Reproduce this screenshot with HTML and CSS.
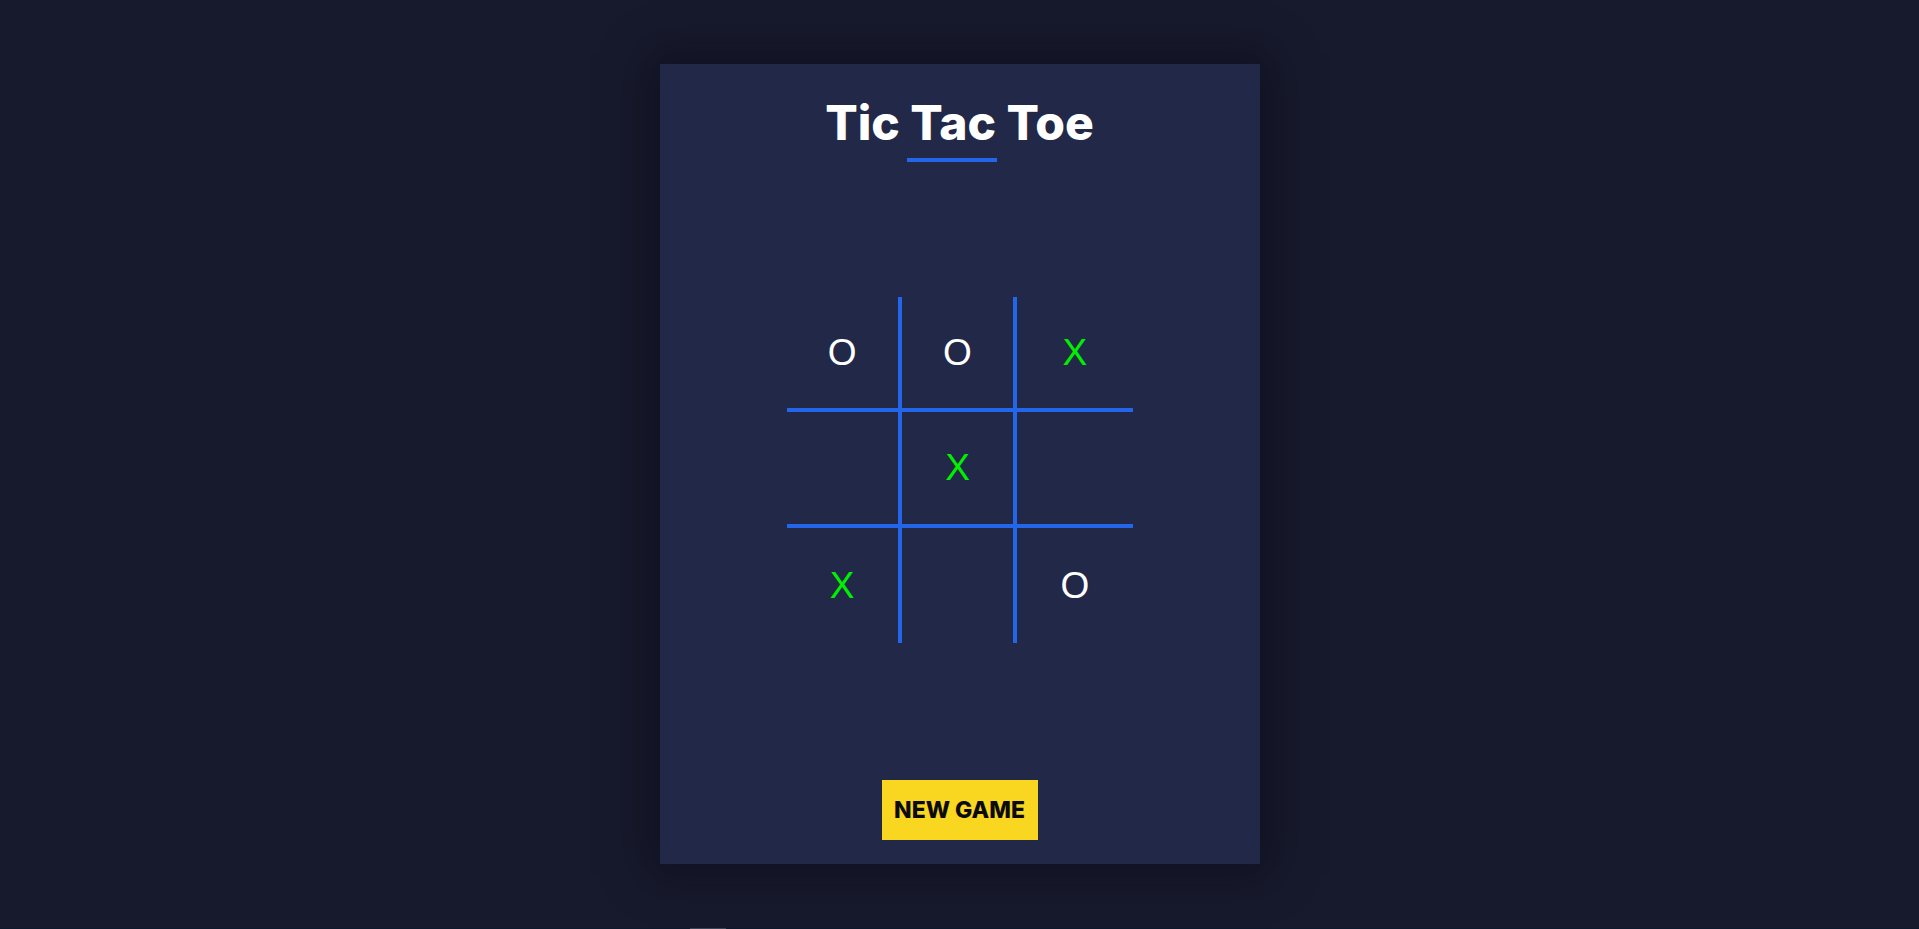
FILE: index.html
```html
<!DOCTYPE html>
<html lang="en">
<head>
<meta charset="utf-8">
<title>Tic Tac Toe</title>
<link rel="stylesheet" href="styles.css">
</head>
<body>
<main class="page">
  <section class="card">
    <header class="header">
      <h1 class="title">Tic Tac Toe</h1>
      <div class="underline"></div>
    </header>
    <div class="board">
      <div class="cell o">O</div>
      <div class="cell o">O</div>
      <div class="cell x">X</div>
      <div class="cell empty"></div>
      <div class="cell x">X</div>
      <div class="cell empty"></div>
      <div class="cell x">X</div>
      <div class="cell empty"></div>
      <div class="cell o">O</div>
    </div>
    <button class="new-game">NEW GAME</button>
  </section>
</main>
<footer class="footer">
  <div class="footer-mark"></div>
</footer>
</body>
</html>
```
FILE: styles.css
```css
* { box-sizing: border-box; }
html, body { margin: 0; padding: 0; }
body {
  background: #171a2d;
  font-family: "Inter", "Liberation Sans", sans-serif;
}
.page {
  height: 928px;
  display: flex;
  align-items: center;
  justify-content: center;
}
.card {
  width: 600px;
  height: 800px;
  background: #212848;
  box-shadow: 0 0 40px 10px rgba(10, 11, 20, 0.55);
  display: flex;
  flex-direction: column;
  align-items: center;
  padding: 30px 0 24px;
}
.header {
  display: flex;
  flex-direction: column;
  align-items: center;
}
.title {
  margin: 0;
  color: #ffffff;
  font-family: "Inter", sans-serif;
  font-weight: 800;
  font-size: 48px;
  line-height: 58px;
  letter-spacing: 0;
}
.underline {
  width: 90px;
  height: 4px;
  margin-top: 6px;
  margin-left: -16px;
  background: #2366ea;
}
.board {
  margin-top: 135px;
  width: 346px;
  height: 346px;
  display: grid;
  grid-template-columns: repeat(3, 1fr);
  grid-template-rows: repeat(3, 1fr);
}
.cell {
  display: flex;
  align-items: center;
  justify-content: center;
  font-family: "Liberation Sans", Arial, sans-serif;
  font-size: 37px;
  line-height: 1;
  color: #ffffff;
}
.cell.x { color: #00f000; }
.cell:nth-child(3n+1), .cell:nth-child(3n+2) { border-right: 4px solid #2366ea; }
.cell:nth-child(-n+6) { border-bottom: 4px solid #2366ea; }
.new-game {
  margin-top: auto;
  width: 156px;
  height: 60px;
  border: none;
  padding: 0;
  background: #f9d61f;
  color: #0b0b0b;
  font-family: "Inter", sans-serif;
  font-weight: 800;
  font-size: 23px;
  letter-spacing: 0;
}
.footer {
  background: #0b1a2c;
  height: 40px;
}
.footer-mark {
  margin-left: 690px;
  width: 36px;
  height: 1px;
  background: #3a4558;
}
```
